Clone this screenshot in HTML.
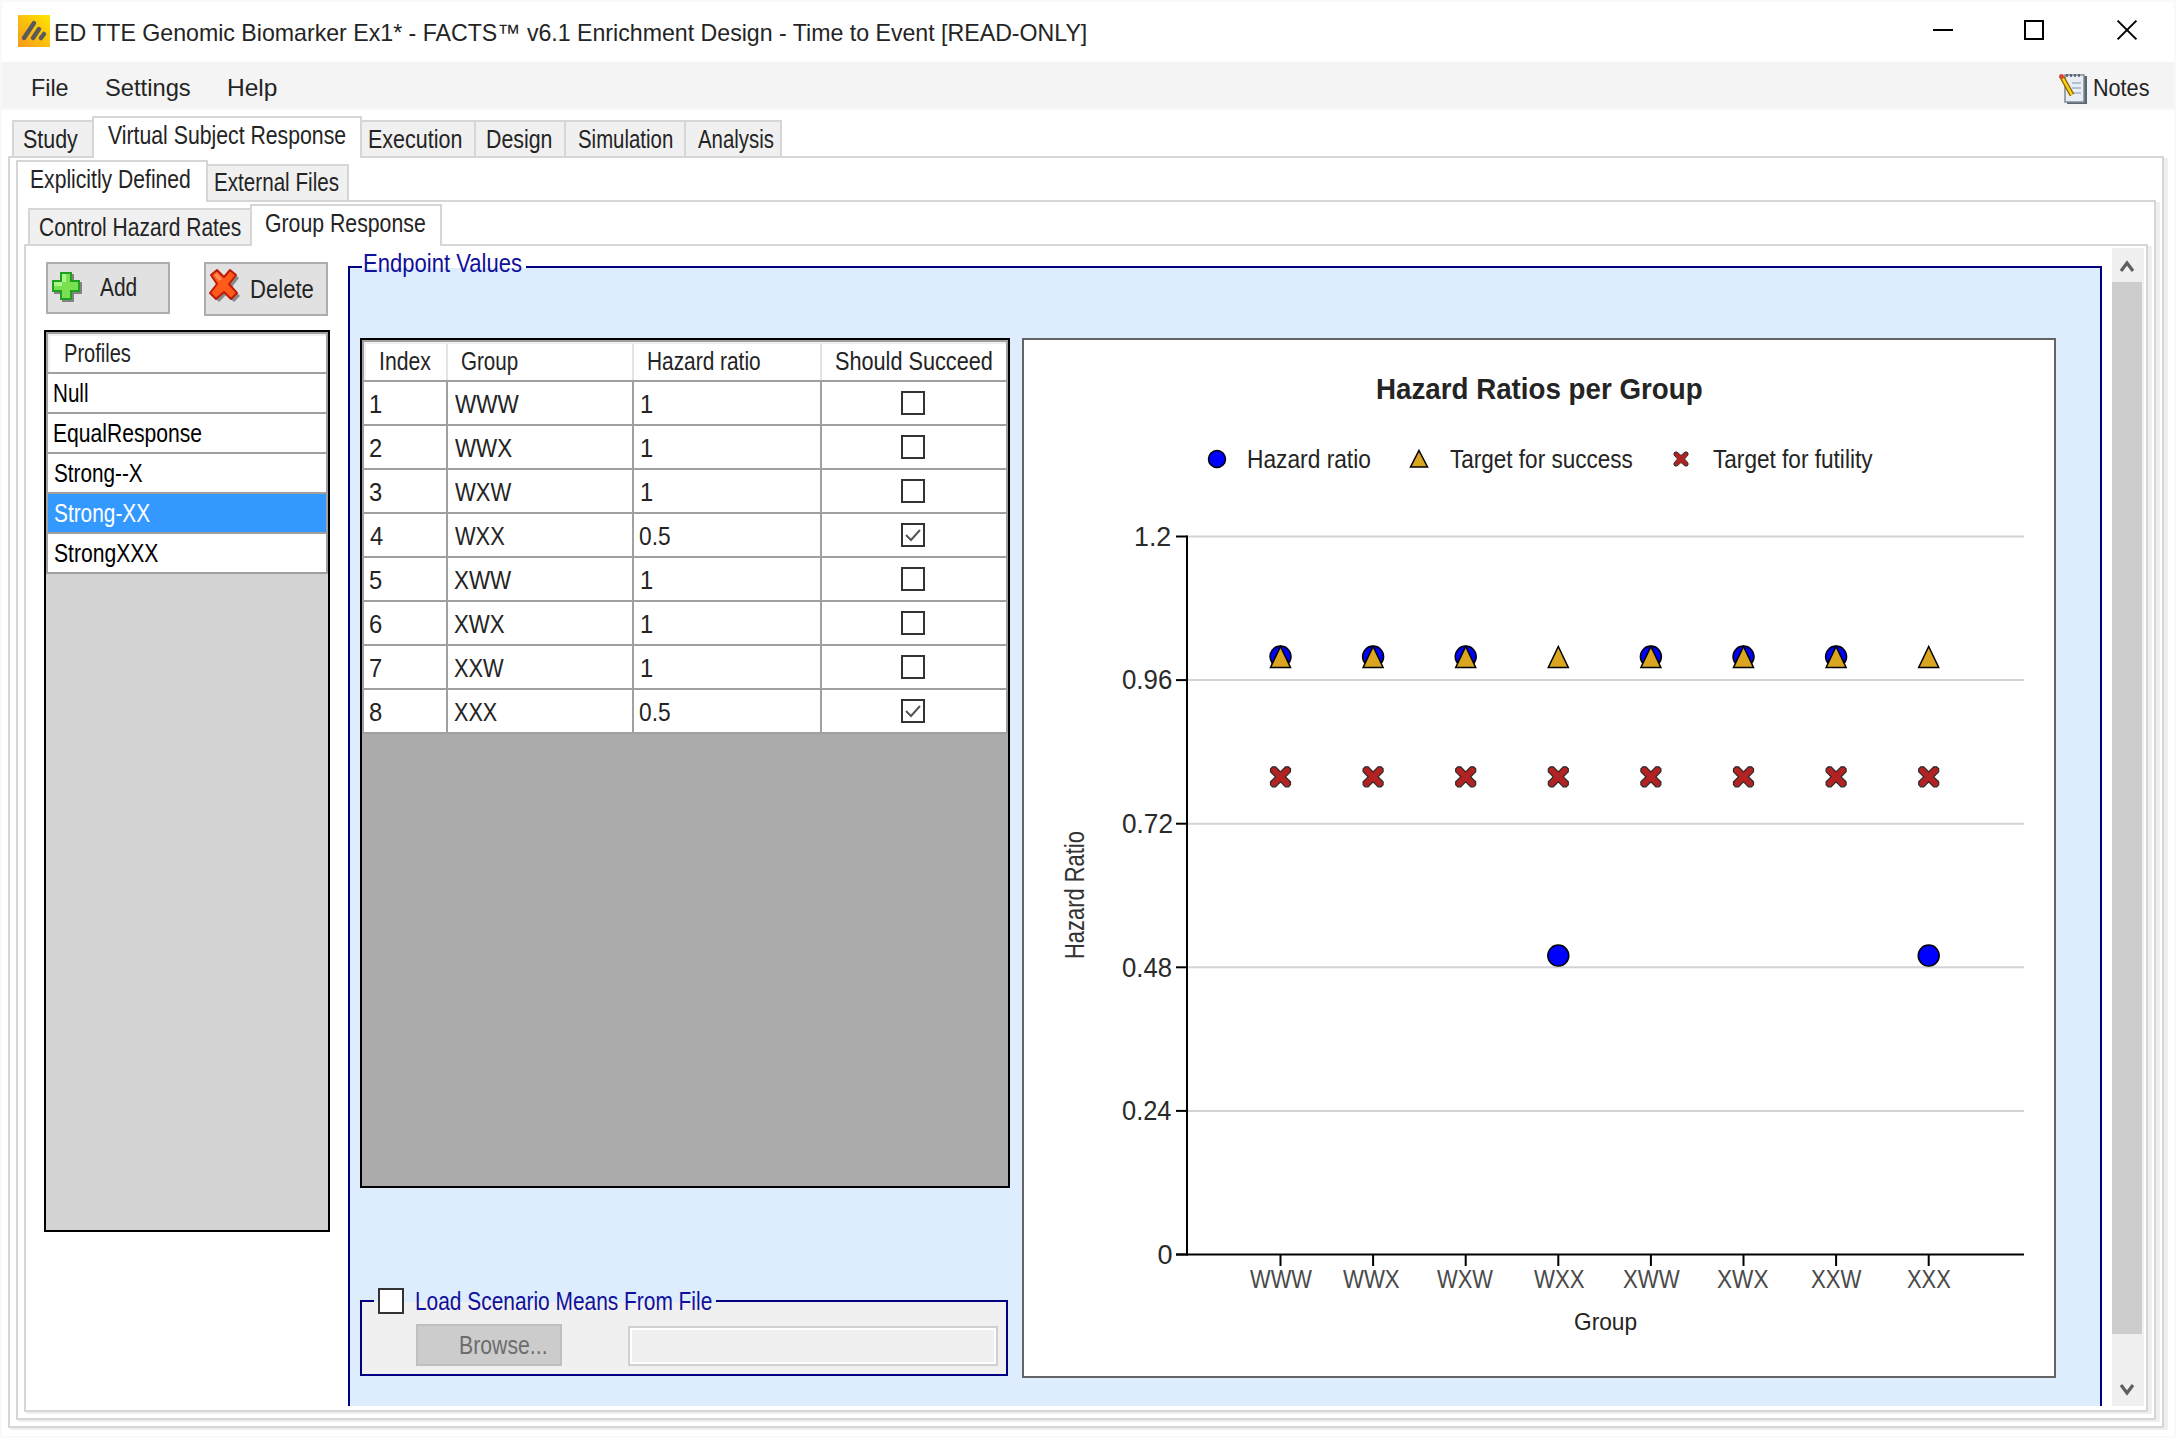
<!DOCTYPE html>
<html><head><meta charset="utf-8"><style>
html,body{margin:0;padding:0;width:2176px;height:1438px;overflow:hidden;background:#fff;}
body>div,body>svg{position:absolute;}
</style></head><body>
<div style="left:0px;top:0px;width:2176px;height:2px;background:#f9f9f9;"></div>
<div style="left:0px;top:0px;width:2px;height:1438px;background:#f9f9f9;"></div>
<div style="left:0px;top:1436px;width:2176px;height:2px;background:#f9f9f9;"></div>
<div style="left:2174px;top:0px;width:2px;height:1438px;background:#f9f9f9;"></div>
<svg style="left:18px;top:15px" width="32" height="32" viewBox="0 0 32 32"><defs><linearGradient id="ig" x1="1" y1="0" x2="0" y2="1"><stop offset="0" stop-color="#ffe600"/><stop offset="1" stop-color="#f59a1b"/></linearGradient></defs><rect width="32" height="32" fill="url(#ig)"/><g stroke="#5a5a5a" stroke-width="4.5" stroke-linecap="round"><line x1="6" y1="23" x2="16" y2="8"/><line x1="15" y1="23" x2="21" y2="14"/><line x1="23" y1="23" x2="26" y2="19"/></g></svg>
<div style="left:54.07px;top:21.00px;font:normal 24px/24px 'Liberation Sans', sans-serif;color:#242424;white-space:pre;transform:scaleX(0.9644);transform-origin:0 0;">ED TTE Genomic Biomarker Ex1* - FACTS™ v6.1 Enrichment Design - Time to Event [READ-ONLY]</div>
<div style="left:1933px;top:29px;width:20px;height:2px;background:#000;"></div>
<div style="left:2024px;top:20px;width:20px;height:20px;background:transparent;border:2px solid #000;box-sizing:border-box;"></div>
<svg style="left:2115px;top:18px" width="24" height="24" viewBox="0 0 24 24"><g stroke="#000" stroke-width="2"><line x1="2.6" y1="2.6" x2="21.4" y2="21.4"/><line x1="21.4" y1="2.6" x2="2.6" y2="21.4"/></g></svg>
<div style="left:2px;top:62px;width:2172px;height:46px;background:#f4f4f4;"></div>
<div style="left:2px;top:108px;width:2172px;height:2px;background:#f7f8fa;"></div>
<div style="left:31.06px;top:76.00px;font:normal 24px/24px 'Liberation Sans', sans-serif;color:#242424;white-space:pre;transform:scaleX(0.9722);transform-origin:0 0;">File</div>
<div style="left:105.01px;top:76.00px;font:normal 24px/24px 'Liberation Sans', sans-serif;color:#242424;white-space:pre;transform:scaleX(0.9882);transform-origin:0 0;">Settings</div>
<div style="left:226.96px;top:76.00px;font:normal 24px/24px 'Liberation Sans', sans-serif;color:#242424;white-space:pre;transform:scaleX(1.0213);transform-origin:0 0;">Help</div>
<svg style="left:2058px;top:73px" width="32" height="34" viewBox="0 0 32 34"><rect x="9" y="3" width="20" height="28" fill="#5b6670"/><rect x="7" y="2" width="19" height="27" fill="#e9eef5" stroke="#7f8a94" stroke-width="1.5"/><g stroke="#9fb0c8" stroke-width="1.5"><line x1="14" y1="10" x2="23" y2="10"/><line x1="14" y1="15" x2="23" y2="15"/><line x1="14" y1="20" x2="23" y2="20"/></g><g stroke="#4a5560" stroke-width="1.5"><line x1="9" y1="1" x2="9" y2="4"/><line x1="13" y1="1" x2="13" y2="4"/><line x1="17" y1="1" x2="17" y2="4"/><line x1="21" y1="1" x2="21" y2="4"/></g><line x1="4" y1="4" x2="14" y2="22" stroke="#8a6400" stroke-width="5"/><line x1="4" y1="4" x2="14" y2="22" stroke="#ffd21a" stroke-width="2.5"/><circle cx="3.5" cy="3.5" r="2.5" fill="#d8463a"/></svg>
<div style="left:2093.20px;top:76.00px;font:normal 24px/24px 'Liberation Sans', sans-serif;color:#242424;white-space:pre;transform:scaleX(0.9000);transform-origin:0 0;">Notes</div>
<div style="left:8px;top:156px;width:2156px;height:1272px;background:#fff;border:2px solid #d6d6d6;box-sizing:border-box;"></div>
<div style="left:2164px;top:158px;width:4px;height:1272px;background:#efefef;"></div>
<div style="left:10px;top:1428px;width:2158px;height:2px;background:#efefef;"></div>
<div style="left:12px;top:120px;width:82px;height:38px;background:#f0f0f0;border:2px solid #d6d6d6;box-sizing:border-box;"></div>
<div style="left:360px;top:120px;width:116px;height:38px;background:#f0f0f0;border:2px solid #d6d6d6;box-sizing:border-box;"></div>
<div style="left:474px;top:120px;width:92px;height:38px;background:#f0f0f0;border:2px solid #d6d6d6;box-sizing:border-box;"></div>
<div style="left:564px;top:120px;width:122px;height:38px;background:#f0f0f0;border:2px solid #d6d6d6;box-sizing:border-box;"></div>
<div style="left:684px;top:120px;width:98px;height:38px;background:#f0f0f0;border:2px solid #d6d6d6;box-sizing:border-box;"></div>
<div style="left:92px;top:116px;width:270px;height:42px;background:#fff;border:2px solid #d6d6d6;box-sizing:border-box;border-bottom:none;"></div>
<div style="left:23.14px;top:127.00px;font:normal 25px/25px 'Liberation Sans', sans-serif;color:#242424;white-space:pre;transform:scaleX(0.8571);transform-origin:0 0;">Study</div>
<div style="left:108.00px;top:123.00px;font:normal 25px/25px 'Liberation Sans', sans-serif;color:#242424;white-space:pre;transform:scaleX(0.8495);transform-origin:0 0;">Virtual Subject Response</div>
<div style="left:368.28px;top:127.00px;font:normal 25px/25px 'Liberation Sans', sans-serif;color:#242424;white-space:pre;transform:scaleX(0.8598);transform-origin:0 0;">Execution</div>
<div style="left:486.29px;top:127.00px;font:normal 25px/25px 'Liberation Sans', sans-serif;color:#242424;white-space:pre;transform:scaleX(0.8533);transform-origin:0 0;">Design</div>
<div style="left:578.18px;top:127.00px;font:normal 25px/25px 'Liberation Sans', sans-serif;color:#242424;white-space:pre;transform:scaleX(0.8158);transform-origin:0 0;">Simulation</div>
<div style="left:698.00px;top:127.00px;font:normal 25px/25px 'Liberation Sans', sans-serif;color:#242424;white-space:pre;transform:scaleX(0.8152);transform-origin:0 0;">Analysis</div>
<div style="left:16px;top:200px;width:2140px;height:1220px;background:#fff;border:2px solid #d6d6d6;box-sizing:border-box;"></div>
<div style="left:2156px;top:202px;width:4px;height:1220px;background:#efefef;"></div>
<div style="left:18px;top:1420px;width:2142px;height:2px;background:#efefef;"></div>
<div style="left:206px;top:164px;width:143px;height:38px;background:#f0f0f0;border:2px solid #d6d6d6;box-sizing:border-box;"></div>
<div style="left:16px;top:160px;width:192px;height:42px;background:#fff;border:2px solid #d6d6d6;box-sizing:border-box;border-bottom:none;"></div>
<div style="left:30.31px;top:167.00px;font:normal 25px/25px 'Liberation Sans', sans-serif;color:#242424;white-space:pre;transform:scaleX(0.8449);transform-origin:0 0;">Explicitly Defined</div>
<div style="left:214.35px;top:170.00px;font:normal 25px/25px 'Liberation Sans', sans-serif;color:#242424;white-space:pre;transform:scaleX(0.8255);transform-origin:0 0;">External Files</div>
<div style="left:24px;top:244px;width:2124px;height:1168px;background:#fff;border:2px solid #d6d6d6;box-sizing:border-box;"></div>
<div style="left:2148px;top:246px;width:4px;height:1168px;background:#efefef;"></div>
<div style="left:26px;top:1412px;width:2126px;height:2px;background:#efefef;"></div>
<div style="left:28px;top:208px;width:224px;height:38px;background:#f0f0f0;border:2px solid #d6d6d6;box-sizing:border-box;"></div>
<div style="left:250px;top:204px;width:192px;height:42px;background:#fff;border:2px solid #d6d6d6;box-sizing:border-box;border-bottom:none;"></div>
<div style="left:39.16px;top:215.00px;font:normal 25px/25px 'Liberation Sans', sans-serif;color:#242424;white-space:pre;transform:scaleX(0.8410);transform-origin:0 0;">Control Hazard Rates</div>
<div style="left:265.15px;top:211.00px;font:normal 25px/25px 'Liberation Sans', sans-serif;color:#242424;white-space:pre;transform:scaleX(0.8503);transform-origin:0 0;">Group Response</div>
<div style="left:46px;top:262px;width:124px;height:52px;background:#e1e1e1;border:2px solid #adadad;box-sizing:border-box;"></div>
<div style="left:204px;top:262px;width:124px;height:54px;background:#e1e1e1;border:2px solid #adadad;box-sizing:border-box;"></div>
<svg style="left:46px;top:266px" width="40" height="40" viewBox="0 0 40 40"><path d="M16 8h12v8h8v12h-8v8h-12v-8h-8v-12h8z" fill="#5a5a5a" opacity="0.7"/><path d="M14 6h12v8h8v12h-8v8h-12v-8h-8v-12h8z" fill="#20a020"/><path d="M16 8h8v8h8v8h-8v8h-8v-8h-8v-8h8z" fill="#7ae052"/><path d="M16 8h4v8h-4zM8 16h8v4h-8z" fill="#a8f78a"/></svg>
<svg style="left:204px;top:266px" width="40" height="40" viewBox="0 0 40 40"><path d="M8 10 L14 5 L20 12 L27 5 L33 10 L26 19 L34 28 L28 34 L20 27 L13 34 L7 28 L14 19 Z" fill="#505050" opacity="0.6" transform="translate(2,2)"/><path d="M7 9 L13 4 L20 11 L26 4 L32 9 L25 18 L33 27 L27 33 L20 26 L12 33 L6 27 L13 18 Z" fill="#ff5a1a" stroke="#c01a08" stroke-width="2" stroke-linejoin="round"/><path d="M10 9 L13 7 L18 13 L15 15 Z" fill="#ff9a6a" opacity="0.8"/></svg>
<div style="left:100.00px;top:275.00px;font:normal 25px/25px 'Liberation Sans', sans-serif;color:#242424;white-space:pre;transform:scaleX(0.8372);transform-origin:0 0;">Add</div>
<div style="left:250.23px;top:277.00px;font:normal 25px/25px 'Liberation Sans', sans-serif;color:#242424;white-space:pre;transform:scaleX(0.8841);transform-origin:0 0;">Delete</div>
<div style="left:44px;top:330px;width:286px;height:902px;background:#d3d3d3;border:2px solid #000;box-sizing:border-box;"></div>
<div style="left:46px;top:332px;width:282px;height:42px;background:#a0a0a0;"></div>
<div style="left:48px;top:334px;width:278px;height:38px;background:#f0f0f0;"></div>
<div style="left:50px;top:336px;width:276px;height:36px;background:#fff;"></div>
<div style="left:46px;top:372px;width:282px;height:42px;background:#a0a0a0;"></div>
<div style="left:48px;top:374px;width:278px;height:38px;background:#fff;"></div>
<div style="left:46px;top:412px;width:282px;height:42px;background:#a0a0a0;"></div>
<div style="left:48px;top:414px;width:278px;height:38px;background:#fff;"></div>
<div style="left:46px;top:452px;width:282px;height:42px;background:#a0a0a0;"></div>
<div style="left:48px;top:454px;width:278px;height:38px;background:#fff;"></div>
<div style="left:46px;top:492px;width:282px;height:42px;background:#a0a0a0;"></div>
<div style="left:48px;top:494px;width:278px;height:38px;background:#3399ff;"></div>
<div style="left:46px;top:532px;width:282px;height:42px;background:#a0a0a0;"></div>
<div style="left:48px;top:534px;width:278px;height:38px;background:#fff;"></div>
<div style="left:64.40px;top:341.00px;font:normal 25px/25px 'Liberation Sans', sans-serif;color:#242424;white-space:pre;transform:scaleX(0.8025);transform-origin:0 0;">Profiles</div>
<div style="left:53.35px;top:381.00px;font:normal 25px/25px 'Liberation Sans', sans-serif;color:#000;white-space:pre;transform:scaleX(0.8250);transform-origin:0 0;">Null</div>
<div style="left:53.31px;top:421.00px;font:normal 25px/25px 'Liberation Sans', sans-serif;color:#000;white-space:pre;transform:scaleX(0.8448);transform-origin:0 0;">EqualResponse</div>
<div style="left:54.17px;top:461.00px;font:normal 25px/25px 'Liberation Sans', sans-serif;color:#000;white-space:pre;transform:scaleX(0.8286);transform-origin:0 0;">Strong--X</div>
<div style="left:54.17px;top:501.00px;font:normal 25px/25px 'Liberation Sans', sans-serif;color:#fff;white-space:pre;transform:scaleX(0.8333);transform-origin:0 0;">Strong-XX</div>
<div style="left:54.16px;top:541.00px;font:normal 25px/25px 'Liberation Sans', sans-serif;color:#000;white-space:pre;transform:scaleX(0.8443);transform-origin:0 0;">StrongXXX</div>
<div style="left:348px;top:268px;width:1752px;height:1138px;background:#ddedfd;"></div>
<div style="left:348px;top:266px;width:2px;height:1140px;background:#000080;"></div>
<div style="left:2100px;top:266px;width:2px;height:1140px;background:#000080;"></div>
<div style="left:348px;top:266px;width:14px;height:2px;background:#000080;"></div>
<div style="left:526px;top:266px;width:1576px;height:2px;background:#000080;"></div>
<div style="left:363.24px;top:251.00px;font:normal 25px/25px 'Liberation Sans', sans-serif;color:#10109a;white-space:pre;transform:scaleX(0.8820);transform-origin:0 0;">Endpoint Values</div>
<div style="left:360px;top:338px;width:650px;height:850px;background:#ababab;border:2px solid #000;box-sizing:border-box;"></div>
<div style="left:362px;top:340px;width:646px;height:42px;background:#a0a0a0;"></div>
<div style="left:364px;top:342px;width:642px;height:38px;background:#f0f0f0;"></div>
<div style="left:366px;top:344px;width:640px;height:36px;background:#fff;"></div>
<div style="left:446px;top:344px;width:2px;height:36px;background:#e3e3e3;"></div>
<div style="left:632px;top:344px;width:2px;height:36px;background:#e3e3e3;"></div>
<div style="left:820px;top:344px;width:2px;height:36px;background:#e3e3e3;"></div>
<div style="left:362px;top:380px;width:646px;height:354px;background:#a0a0a0;"></div>
<div style="left:364px;top:382px;width:82px;height:42px;background:#fff;"></div>
<div style="left:448px;top:382px;width:184px;height:42px;background:#fff;"></div>
<div style="left:634px;top:382px;width:186px;height:42px;background:#fff;"></div>
<div style="left:822px;top:382px;width:184px;height:42px;background:#fff;"></div>
<div style="left:364px;top:426px;width:82px;height:42px;background:#fff;"></div>
<div style="left:448px;top:426px;width:184px;height:42px;background:#fff;"></div>
<div style="left:634px;top:426px;width:186px;height:42px;background:#fff;"></div>
<div style="left:822px;top:426px;width:184px;height:42px;background:#fff;"></div>
<div style="left:364px;top:470px;width:82px;height:42px;background:#fff;"></div>
<div style="left:448px;top:470px;width:184px;height:42px;background:#fff;"></div>
<div style="left:634px;top:470px;width:186px;height:42px;background:#fff;"></div>
<div style="left:822px;top:470px;width:184px;height:42px;background:#fff;"></div>
<div style="left:364px;top:514px;width:82px;height:42px;background:#fff;"></div>
<div style="left:448px;top:514px;width:184px;height:42px;background:#fff;"></div>
<div style="left:634px;top:514px;width:186px;height:42px;background:#fff;"></div>
<div style="left:822px;top:514px;width:184px;height:42px;background:#fff;"></div>
<div style="left:364px;top:558px;width:82px;height:42px;background:#fff;"></div>
<div style="left:448px;top:558px;width:184px;height:42px;background:#fff;"></div>
<div style="left:634px;top:558px;width:186px;height:42px;background:#fff;"></div>
<div style="left:822px;top:558px;width:184px;height:42px;background:#fff;"></div>
<div style="left:364px;top:602px;width:82px;height:42px;background:#fff;"></div>
<div style="left:448px;top:602px;width:184px;height:42px;background:#fff;"></div>
<div style="left:634px;top:602px;width:186px;height:42px;background:#fff;"></div>
<div style="left:822px;top:602px;width:184px;height:42px;background:#fff;"></div>
<div style="left:364px;top:646px;width:82px;height:42px;background:#fff;"></div>
<div style="left:448px;top:646px;width:184px;height:42px;background:#fff;"></div>
<div style="left:634px;top:646px;width:186px;height:42px;background:#fff;"></div>
<div style="left:822px;top:646px;width:184px;height:42px;background:#fff;"></div>
<div style="left:364px;top:690px;width:82px;height:42px;background:#fff;"></div>
<div style="left:448px;top:690px;width:184px;height:42px;background:#fff;"></div>
<div style="left:634px;top:690px;width:186px;height:42px;background:#fff;"></div>
<div style="left:822px;top:690px;width:184px;height:42px;background:#fff;"></div>
<div style="left:379.31px;top:349.00px;font:normal 25px/25px 'Liberation Sans', sans-serif;color:#242424;white-space:pre;transform:scaleX(0.8475);transform-origin:0 0;">Index</div>
<div style="left:461.18px;top:349.00px;font:normal 25px/25px 'Liberation Sans', sans-serif;color:#242424;white-space:pre;transform:scaleX(0.8235);transform-origin:0 0;">Group</div>
<div style="left:647.33px;top:349.00px;font:normal 25px/25px 'Liberation Sans', sans-serif;color:#242424;white-space:pre;transform:scaleX(0.8346);transform-origin:0 0;">Hazard ratio</div>
<div style="left:835.13px;top:349.00px;font:normal 25px/25px 'Liberation Sans', sans-serif;color:#242424;white-space:pre;transform:scaleX(0.8667);transform-origin:0 0;">Should Succeed</div>
<div style="left:369.10px;top:392.00px;font:normal 25px/25px 'Liberation Sans', sans-serif;color:#242424;white-space:pre;transform:scaleX(0.9500);transform-origin:0 0;">1</div>
<div style="left:454.50px;top:392.00px;font:normal 25px/25px 'Liberation Sans', sans-serif;color:#242424;white-space:pre;transform:scaleX(0.9000);transform-origin:0 0;">WWW</div>
<div style="left:640.10px;top:392.00px;font:normal 25px/25px 'Liberation Sans', sans-serif;color:#242424;white-space:pre;transform:scaleX(0.9500);transform-origin:0 0;">1</div>
<div style="left:901px;top:391px;width:24px;height:24px;background:#fff;border:2px solid #333;box-sizing:border-box;"></div>
<div style="left:369.05px;top:436.00px;font:normal 25px/25px 'Liberation Sans', sans-serif;color:#242424;white-space:pre;transform:scaleX(0.9500);transform-origin:0 0;">2</div>
<div style="left:454.50px;top:436.00px;font:normal 25px/25px 'Liberation Sans', sans-serif;color:#242424;white-space:pre;transform:scaleX(0.8952);transform-origin:0 0;">WWX</div>
<div style="left:640.10px;top:436.00px;font:normal 25px/25px 'Liberation Sans', sans-serif;color:#242424;white-space:pre;transform:scaleX(0.9500);transform-origin:0 0;">1</div>
<div style="left:901px;top:435px;width:24px;height:24px;background:#fff;border:2px solid #333;box-sizing:border-box;"></div>
<div style="left:369.05px;top:480.00px;font:normal 25px/25px 'Liberation Sans', sans-serif;color:#242424;white-space:pre;transform:scaleX(0.9500);transform-origin:0 0;">3</div>
<div style="left:454.50px;top:480.00px;font:normal 25px/25px 'Liberation Sans', sans-serif;color:#242424;white-space:pre;transform:scaleX(0.8812);transform-origin:0 0;">WXW</div>
<div style="left:640.10px;top:480.00px;font:normal 25px/25px 'Liberation Sans', sans-serif;color:#242424;white-space:pre;transform:scaleX(0.9500);transform-origin:0 0;">1</div>
<div style="left:901px;top:479px;width:24px;height:24px;background:#fff;border:2px solid #333;box-sizing:border-box;"></div>
<div style="left:370.00px;top:524.00px;font:normal 25px/25px 'Liberation Sans', sans-serif;color:#242424;white-space:pre;transform:scaleX(0.9500);transform-origin:0 0;">4</div>
<div style="left:454.50px;top:524.00px;font:normal 25px/25px 'Liberation Sans', sans-serif;color:#242424;white-space:pre;transform:scaleX(0.8732);transform-origin:0 0;">WXX</div>
<div style="left:639.09px;top:524.00px;font:normal 25px/25px 'Liberation Sans', sans-serif;color:#242424;white-space:pre;transform:scaleX(0.9091);transform-origin:0 0;">0.5</div>
<div style="left:901px;top:523px;width:24px;height:24px;background:#fff;border:2px solid #333;box-sizing:border-box;"></div>
<svg style="left:901px;top:523px" width="24" height="24" viewBox="0 0 24 24"><polyline points="5,12 10,17 19,7" fill="none" stroke="#555" stroke-width="2"/></svg>
<div style="left:369.05px;top:568.00px;font:normal 25px/25px 'Liberation Sans', sans-serif;color:#242424;white-space:pre;transform:scaleX(0.9500);transform-origin:0 0;">5</div>
<div style="left:453.60px;top:568.00px;font:normal 25px/25px 'Liberation Sans', sans-serif;color:#242424;white-space:pre;transform:scaleX(0.8952);transform-origin:0 0;">XWW</div>
<div style="left:640.10px;top:568.00px;font:normal 25px/25px 'Liberation Sans', sans-serif;color:#242424;white-space:pre;transform:scaleX(0.9500);transform-origin:0 0;">1</div>
<div style="left:901px;top:567px;width:24px;height:24px;background:#fff;border:2px solid #333;box-sizing:border-box;"></div>
<div style="left:369.05px;top:612.00px;font:normal 25px/25px 'Liberation Sans', sans-serif;color:#242424;white-space:pre;transform:scaleX(0.9500);transform-origin:0 0;">6</div>
<div style="left:453.61px;top:612.00px;font:normal 25px/25px 'Liberation Sans', sans-serif;color:#242424;white-space:pre;transform:scaleX(0.8891);transform-origin:0 0;">XWX</div>
<div style="left:640.10px;top:612.00px;font:normal 25px/25px 'Liberation Sans', sans-serif;color:#242424;white-space:pre;transform:scaleX(0.9500);transform-origin:0 0;">1</div>
<div style="left:901px;top:611px;width:24px;height:24px;background:#fff;border:2px solid #333;box-sizing:border-box;"></div>
<div style="left:369.05px;top:656.00px;font:normal 25px/25px 'Liberation Sans', sans-serif;color:#242424;white-space:pre;transform:scaleX(0.9500);transform-origin:0 0;">7</div>
<div style="left:453.63px;top:656.00px;font:normal 25px/25px 'Liberation Sans', sans-serif;color:#242424;white-space:pre;transform:scaleX(0.8732);transform-origin:0 0;">XXW</div>
<div style="left:640.10px;top:656.00px;font:normal 25px/25px 'Liberation Sans', sans-serif;color:#242424;white-space:pre;transform:scaleX(0.9500);transform-origin:0 0;">1</div>
<div style="left:901px;top:655px;width:24px;height:24px;background:#fff;border:2px solid #333;box-sizing:border-box;"></div>
<div style="left:369.05px;top:700.00px;font:normal 25px/25px 'Liberation Sans', sans-serif;color:#242424;white-space:pre;transform:scaleX(0.9500);transform-origin:0 0;">8</div>
<div style="left:453.64px;top:700.00px;font:normal 25px/25px 'Liberation Sans', sans-serif;color:#242424;white-space:pre;transform:scaleX(0.8625);transform-origin:0 0;">XXX</div>
<div style="left:639.09px;top:700.00px;font:normal 25px/25px 'Liberation Sans', sans-serif;color:#242424;white-space:pre;transform:scaleX(0.9091);transform-origin:0 0;">0.5</div>
<div style="left:901px;top:699px;width:24px;height:24px;background:#fff;border:2px solid #333;box-sizing:border-box;"></div>
<svg style="left:901px;top:699px" width="24" height="24" viewBox="0 0 24 24"><polyline points="5,12 10,17 19,7" fill="none" stroke="#555" stroke-width="2"/></svg>
<div style="left:362px;top:1302px;width:644px;height:72px;background:#f0f0f0;"></div>
<div style="left:360px;top:1300px;width:2px;height:76px;background:#000080;"></div>
<div style="left:1006px;top:1300px;width:2px;height:76px;background:#000080;"></div>
<div style="left:360px;top:1374px;width:648px;height:2px;background:#000080;"></div>
<div style="left:360px;top:1300px;width:14px;height:2px;background:#000080;"></div>
<div style="left:716px;top:1300px;width:292px;height:2px;background:#000080;"></div>
<div style="left:378px;top:1288px;width:26px;height:26px;background:#fff;border:2px solid #333;box-sizing:border-box;"></div>
<div style="left:415.33px;top:1289.00px;font:normal 25px/25px 'Liberation Sans', sans-serif;color:#10109a;white-space:pre;transform:scaleX(0.8357);transform-origin:0 0;">Load Scenario Means From File</div>
<div style="left:416px;top:1324px;width:146px;height:42px;background:#cccccc;border:2px solid #bfbfbf;box-sizing:border-box;"></div>
<div style="left:459.30px;top:1333.00px;font:normal 25px/25px 'Liberation Sans', sans-serif;color:#6d6d6d;white-space:pre;transform:scaleX(0.8500);transform-origin:0 0;">Browse...</div>
<div style="left:628px;top:1326px;width:370px;height:40px;background:#f0f0f0;border:2px solid #d0d0d0;box-sizing:border-box;box-shadow:inset 0 0 0 2px #fff;"></div>
<div style="left:2112px;top:248px;width:32px;height:1158px;background:#f0f0f0;"></div>
<div style="left:2112px;top:282px;width:30px;height:1052px;background:#cdcdcd;"></div>
<svg style="left:2118px;top:258px" width="18" height="16" viewBox="0 0 18 16"><polyline points="3,13 9,5 15,13" fill="none" stroke="#606060" stroke-width="3.2"/></svg>
<svg style="left:2118px;top:1382px" width="18" height="16" viewBox="0 0 18 16"><polyline points="3,3 9,11 15,3" fill="none" stroke="#606060" stroke-width="3.2"/></svg>
<div style="left:1022px;top:338px;width:1034px;height:1040px;background:#fff;border:2px solid #646464;box-sizing:border-box;"></div>
<div style="left:1375.65px;top:374.30px;font:bold 30px/30px 'Liberation Sans', sans-serif;color:#242424;white-space:pre;transform:scaleX(0.9243);transform-origin:0 0;">Hazard Ratios per Group</div>
<svg style="left:1200px;top:440px" width="700" height="40" viewBox="1200 440 700 40"><circle cx="1217" cy="459" r="8.5" fill="#0000ff" stroke="#000" stroke-width="1.5"/><path d="M1419 450.5 L1427.5 467 L1410.5 467 Z" fill="#daa520" stroke="#000" stroke-width="1.5"/><g transform="translate(1681,459)"><path d="M-7 -6 L-6 -7 L-4 -7 L0 -3.5 L4 -7 L6 -7 L7 -6 L7 -4 L3.5 0 L7 4 L7 6 L6 7 L4 7 L0 3.5 L-4 7 L-6 7 L-7 6 L-7 4 L-3.5 0 L-7 -4 Z" fill="#b22222" stroke="#333" stroke-width="1"/></g></svg>
<div style="left:1247.18px;top:446.60px;font:normal 25px/25px 'Liberation Sans', sans-serif;color:#242424;white-space:pre;transform:scaleX(0.9098);transform-origin:0 0;">Hazard ratio</div>
<div style="left:1450.00px;top:446.60px;font:normal 25px/25px 'Liberation Sans', sans-serif;color:#242424;white-space:pre;transform:scaleX(0.9010);transform-origin:0 0;">Target for success</div>
<div style="left:1713.00px;top:446.60px;font:normal 25px/25px 'Liberation Sans', sans-serif;color:#242424;white-space:pre;transform:scaleX(0.9040);transform-origin:0 0;">Target for futility</div>
<svg style="left:1022px;top:338px" width="1034" height="1040" viewBox="1022 338 1034 1040"><line x1="1188" y1="1110.9" x2="2024" y2="1110.9" stroke="#d3d3d3" stroke-width="2"/><line x1="1188" y1="967.3" x2="2024" y2="967.3" stroke="#d3d3d3" stroke-width="2"/><line x1="1188" y1="823.7" x2="2024" y2="823.7" stroke="#d3d3d3" stroke-width="2"/><line x1="1188" y1="680.1" x2="2024" y2="680.1" stroke="#d3d3d3" stroke-width="2"/><line x1="1188" y1="536.5" x2="2024" y2="536.5" stroke="#d3d3d3" stroke-width="2"/><line x1="1176" y1="1254.5" x2="1187" y2="1254.5" stroke="#000" stroke-width="2"/><line x1="1176" y1="1110.9" x2="1187" y2="1110.9" stroke="#000" stroke-width="2"/><line x1="1176" y1="967.3" x2="1187" y2="967.3" stroke="#000" stroke-width="2"/><line x1="1176" y1="823.7" x2="1187" y2="823.7" stroke="#000" stroke-width="2"/><line x1="1176" y1="680.1" x2="1187" y2="680.1" stroke="#000" stroke-width="2"/><line x1="1176" y1="536.5" x2="1187" y2="536.5" stroke="#000" stroke-width="2"/><line x1="1187" y1="535.5" x2="1187" y2="1255.5" stroke="#000" stroke-width="2"/><line x1="1176" y1="1254.5" x2="2024" y2="1254.5" stroke="#000" stroke-width="2"/><line x1="1280.5" y1="1254.5" x2="1280.5" y2="1266" stroke="#000" stroke-width="2"/><line x1="1373.1" y1="1254.5" x2="1373.1" y2="1266" stroke="#000" stroke-width="2"/><line x1="1465.7" y1="1254.5" x2="1465.7" y2="1266" stroke="#000" stroke-width="2"/><line x1="1558.3" y1="1254.5" x2="1558.3" y2="1266" stroke="#000" stroke-width="2"/><line x1="1650.9" y1="1254.5" x2="1650.9" y2="1266" stroke="#000" stroke-width="2"/><line x1="1743.5" y1="1254.5" x2="1743.5" y2="1266" stroke="#000" stroke-width="2"/><line x1="1836.1" y1="1254.5" x2="1836.1" y2="1266" stroke="#000" stroke-width="2"/><line x1="1928.7" y1="1254.5" x2="1928.7" y2="1266" stroke="#000" stroke-width="2"/><g transform="translate(1280.5,776.8)"><path d="M-10 -8 L-8 -10 L-5 -10 L0 -5 L5 -10 L8 -10 L10 -8 L10 -5 L5 0 L10 5 L10 8 L8 10 L5 10 L0 5 L-5 10 L-8 10 L-10 8 L-10 5 L-5 0 L-10 -5 Z" fill="#b22222" stroke="#2a2a2a" stroke-width="1.2"/></g><g transform="translate(1373.1,776.8)"><path d="M-10 -8 L-8 -10 L-5 -10 L0 -5 L5 -10 L8 -10 L10 -8 L10 -5 L5 0 L10 5 L10 8 L8 10 L5 10 L0 5 L-5 10 L-8 10 L-10 8 L-10 5 L-5 0 L-10 -5 Z" fill="#b22222" stroke="#2a2a2a" stroke-width="1.2"/></g><g transform="translate(1465.7,776.8)"><path d="M-10 -8 L-8 -10 L-5 -10 L0 -5 L5 -10 L8 -10 L10 -8 L10 -5 L5 0 L10 5 L10 8 L8 10 L5 10 L0 5 L-5 10 L-8 10 L-10 8 L-10 5 L-5 0 L-10 -5 Z" fill="#b22222" stroke="#2a2a2a" stroke-width="1.2"/></g><g transform="translate(1558.3,776.8)"><path d="M-10 -8 L-8 -10 L-5 -10 L0 -5 L5 -10 L8 -10 L10 -8 L10 -5 L5 0 L10 5 L10 8 L8 10 L5 10 L0 5 L-5 10 L-8 10 L-10 8 L-10 5 L-5 0 L-10 -5 Z" fill="#b22222" stroke="#2a2a2a" stroke-width="1.2"/></g><g transform="translate(1650.9,776.8)"><path d="M-10 -8 L-8 -10 L-5 -10 L0 -5 L5 -10 L8 -10 L10 -8 L10 -5 L5 0 L10 5 L10 8 L8 10 L5 10 L0 5 L-5 10 L-8 10 L-10 8 L-10 5 L-5 0 L-10 -5 Z" fill="#b22222" stroke="#2a2a2a" stroke-width="1.2"/></g><g transform="translate(1743.5,776.8)"><path d="M-10 -8 L-8 -10 L-5 -10 L0 -5 L5 -10 L8 -10 L10 -8 L10 -5 L5 0 L10 5 L10 8 L8 10 L5 10 L0 5 L-5 10 L-8 10 L-10 8 L-10 5 L-5 0 L-10 -5 Z" fill="#b22222" stroke="#2a2a2a" stroke-width="1.2"/></g><g transform="translate(1836.1,776.8)"><path d="M-10 -8 L-8 -10 L-5 -10 L0 -5 L5 -10 L8 -10 L10 -8 L10 -5 L5 0 L10 5 L10 8 L8 10 L5 10 L0 5 L-5 10 L-8 10 L-10 8 L-10 5 L-5 0 L-10 -5 Z" fill="#b22222" stroke="#2a2a2a" stroke-width="1.2"/></g><g transform="translate(1928.7,776.8)"><path d="M-10 -8 L-8 -10 L-5 -10 L0 -5 L5 -10 L8 -10 L10 -8 L10 -5 L5 0 L10 5 L10 8 L8 10 L5 10 L0 5 L-5 10 L-8 10 L-10 8 L-10 5 L-5 0 L-10 -5 Z" fill="#b22222" stroke="#2a2a2a" stroke-width="1.2"/></g><circle cx="1280.5" cy="656.6" r="10.5" fill="#0000ff" stroke="#000" stroke-width="1.5"/><circle cx="1373.1" cy="656.6" r="10.5" fill="#0000ff" stroke="#000" stroke-width="1.5"/><circle cx="1465.7" cy="656.6" r="10.5" fill="#0000ff" stroke="#000" stroke-width="1.5"/><circle cx="1558.3" cy="955.6" r="10.5" fill="#0000ff" stroke="#000" stroke-width="1.5"/><circle cx="1650.9" cy="656.6" r="10.5" fill="#0000ff" stroke="#000" stroke-width="1.5"/><circle cx="1743.5" cy="656.6" r="10.5" fill="#0000ff" stroke="#000" stroke-width="1.5"/><circle cx="1836.1" cy="656.6" r="10.5" fill="#0000ff" stroke="#000" stroke-width="1.5"/><circle cx="1928.7" cy="955.6" r="10.5" fill="#0000ff" stroke="#000" stroke-width="1.5"/><path d="M1280.5 646.5 L1290.5 667.5 L1270.5 667.5 Z" fill="#daa520" stroke="#000" stroke-width="1.5"/><path d="M1373.1 646.5 L1383.1 667.5 L1363.1 667.5 Z" fill="#daa520" stroke="#000" stroke-width="1.5"/><path d="M1465.7 646.5 L1475.7 667.5 L1455.7 667.5 Z" fill="#daa520" stroke="#000" stroke-width="1.5"/><path d="M1558.3 646.5 L1568.3 667.5 L1548.3 667.5 Z" fill="#daa520" stroke="#000" stroke-width="1.5"/><path d="M1650.9 646.5 L1660.9 667.5 L1640.9 667.5 Z" fill="#daa520" stroke="#000" stroke-width="1.5"/><path d="M1743.5 646.5 L1753.5 667.5 L1733.5 667.5 Z" fill="#daa520" stroke="#000" stroke-width="1.5"/><path d="M1836.1 646.5 L1846.1 667.5 L1826.1 667.5 Z" fill="#daa520" stroke="#000" stroke-width="1.5"/><path d="M1928.7 646.5 L1938.7 667.5 L1918.7 667.5 Z" fill="#daa520" stroke="#000" stroke-width="1.5"/></svg>
<div style="left:1157.50px;top:1241.80px;font:normal 27px/27px 'Liberation Sans', sans-serif;color:#2a2a2a;white-space:pre;">0</div>
<div style="left:1121.56px;top:1098.20px;font:normal 27px/27px 'Liberation Sans', sans-serif;color:#2a2a2a;white-space:pre;transform:scaleX(0.9412);transform-origin:0 0;">0.24</div>
<div style="left:1121.55px;top:954.60px;font:normal 27px/27px 'Liberation Sans', sans-serif;color:#2a2a2a;white-space:pre;transform:scaleX(0.9510);transform-origin:0 0;">0.48</div>
<div style="left:1121.53px;top:811.00px;font:normal 27px/27px 'Liberation Sans', sans-serif;color:#2a2a2a;white-space:pre;transform:scaleX(0.9700);transform-origin:0 0;">0.72</div>
<div style="left:1121.54px;top:667.40px;font:normal 27px/27px 'Liberation Sans', sans-serif;color:#2a2a2a;white-space:pre;transform:scaleX(0.9569);transform-origin:0 0;">0.96</div>
<div style="left:1134.32px;top:523.80px;font:normal 27px/27px 'Liberation Sans', sans-serif;color:#2a2a2a;white-space:pre;transform:scaleX(0.9912);transform-origin:0 0;">1.2</div>
<div style="left:1249.70px;top:1267.00px;font:normal 25px/25px 'Liberation Sans', sans-serif;color:#4a4a4a;white-space:pre;transform:scaleX(0.8746);transform-origin:0 0;">WWW</div>
<div style="left:1343.40px;top:1267.00px;font:normal 25px/25px 'Liberation Sans', sans-serif;color:#4a4a4a;white-space:pre;transform:scaleX(0.8873);transform-origin:0 0;">WWX</div>
<div style="left:1437.30px;top:1267.00px;font:normal 25px/25px 'Liberation Sans', sans-serif;color:#4a4a4a;white-space:pre;transform:scaleX(0.8766);transform-origin:0 0;">WXW</div>
<div style="left:1533.70px;top:1267.00px;font:normal 25px/25px 'Liberation Sans', sans-serif;color:#4a4a4a;white-space:pre;transform:scaleX(0.8875);transform-origin:0 0;">WXX</div>
<div style="left:1622.71px;top:1267.00px;font:normal 25px/25px 'Liberation Sans', sans-serif;color:#4a4a4a;white-space:pre;transform:scaleX(0.8889);transform-origin:0 0;">XWW</div>
<div style="left:1716.80px;top:1267.00px;font:normal 25px/25px 'Liberation Sans', sans-serif;color:#4a4a4a;white-space:pre;transform:scaleX(0.9036);transform-origin:0 0;">XWX</div>
<div style="left:1810.91px;top:1267.00px;font:normal 25px/25px 'Liberation Sans', sans-serif;color:#4a4a4a;white-space:pre;transform:scaleX(0.8857);transform-origin:0 0;">XXW</div>
<div style="left:1907.12px;top:1267.00px;font:normal 25px/25px 'Liberation Sans', sans-serif;color:#4a4a4a;white-space:pre;transform:scaleX(0.8750);transform-origin:0 0;">XXX</div>
<div style="left:1573.55px;top:1309.80px;font:normal 24px/24px 'Liberation Sans', sans-serif;color:#242424;white-space:pre;transform:scaleX(0.9462);transform-origin:0 0;">Group</div>
<div style="left:1062.00px;top:959.42px;font:normal 27px/27px 'Liberation Sans', sans-serif;color:#333;white-space:pre;transform:rotate(-90deg) scaleX(0.8116);transform-origin:0 0;">Hazard Ratio</div>
</body></html>
